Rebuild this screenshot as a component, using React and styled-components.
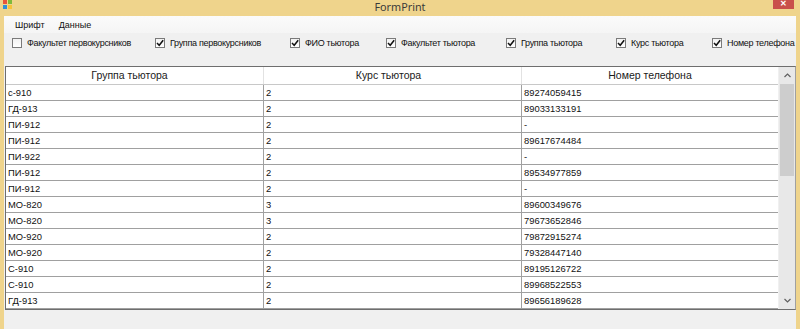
import styled, { createGlobalStyle } from "styled-components";

const GlobalStyle = createGlobalStyle`
  html, body {
    margin: 0;
    padding: 0;
    background: #f0f0f0;
  }
  body {
    font-family: "Liberation Sans", Arial, sans-serif;
    font-size: 9px;
    color: #000;
  }
`;

const Window = styled.div`
  width: 800px;
  height: 329px;
  display: flex;
  flex-direction: column;
  background: #efd48c;
  overflow: hidden;
`;

const TitleBar = styled.div`
  height: 16px;
  flex: none;
  position: relative;
  display: flex;
  align-items: flex-start;
  justify-content: center;
`;

const Title = styled.span`
  font-family: "Noto Sans", "Open Sans", sans-serif;
  font-size: 10.8px;
  color: #3a3a3a;
  line-height: 14px;
`;

const AppIcon = styled.svg`
  position: absolute;
  left: 3px;
  top: 0;
`;

const CloseButton = styled.div`
  position: absolute;
  right: 6px;
  top: 0;
  width: 21px;
  height: 9px;
  background: #c9504b;
  color: #fff;
  font-size: 8px;
  line-height: 8px;
  text-align: center;
  font-weight: bold;
`;

const Frame = styled.div`
  flex: 1;
  display: flex;
  padding: 0 4px 0 4px;
  min-height: 0;
`;

const Client = styled.div`
  flex: 1;
  background: #f0f0f0;
  display: flex;
  flex-direction: column;
  min-width: 0;
`;

const MenuBar = styled.div`
  height: 17px;
  flex: none;
  display: flex;
  align-items: flex-end;
  padding-left: 4px;
  background: linear-gradient(#fbfbfb, #f5f5f5);
`;

const MenuItem = styled.span`
  padding: 0 7px 1px;
  line-height: 13px;
  color: #111;
`;

const CheckRow = styled.div`
  height: 20px;
  flex: none;
  display: flex;
  align-items: center;
  padding-left: 8px;
`;

const CheckItem = styled.label`
  width: ${(p) => p.$w}px;
  flex: none;
  display: flex;
  align-items: center;
  gap: 5px;
  white-space: nowrap;
  letter-spacing: -0.3px;
  color: #111;
`;

const Box = styled.span`
  width: 8px;
  height: 8px;
  border: 1px solid #7a7a7a;
  background: linear-gradient(#f2f2f2, #ffffff);
  display: flex;
  align-items: center;
  justify-content: center;
  flex: none;
`;

const Grid = styled.div`
  margin: 13px 0 0 1px;
  height: 242px;
  flex: none;
  display: flex;
  border: 1px solid #6e6e6e;
  border-right-color: #a0a0a0;
  background: #fff;
`;

const TableArea = styled.div`
  flex: 1;
  overflow: hidden;
`;

const Row = styled.div`
  display: grid;
  grid-template-columns: 258px 258px 1fr;
  height: ${(p) => (p.$head ? 18 : 16)}px;
  box-sizing: border-box;
  border-bottom: 1px solid ${(p) => (p.$head ? "#c8c8c8" : "#a0a0a0")};
`;

const Cell = styled.div`
  padding: 0 2px;
  font-size: 9.4px;
  line-height: 15px;
  color: #111;
  border-right: 1px solid #a0a0a0;
  white-space: nowrap;
  overflow: hidden;
  &:last-child {
    border-right: none;
  }
`;

const HeadCell = styled.div`
  padding: 0 ${(p) => p.$pr}px 0 2px;
  font-size: 10.5px;
  line-height: 17px;
  text-align: center;
  color: #1a1a1a;
  border-right: 1px solid #e2e2e2;
  white-space: nowrap;
  overflow: hidden;
  &:last-child {
    border-right: none;
  }
`;

const ScrollBar = styled.div`
  width: 16px;
  flex: none;
  display: flex;
  flex-direction: column;
  background: #e8e8e8;
  border-left: 1px solid #f0f0f0;
`;

const Arrow = styled.div`
  height: 17px;
  display: flex;
  align-items: center;
  justify-content: center;
  flex: none;
`;

const Thumb = styled.div`
  height: 92px;
  margin: 0 1px;
  background: #cdcdcd;
  flex: none;
`;

const Track = styled.div`
  flex: 1;
`;

const checks = [
  { label: "Факультет первокурсников", w: 143, on: false },
  { label: "Группа первокурсников", w: 135, on: true },
  { label: "ФИО тьютора", w: 96, on: true },
  { label: "Факультет тьютора", w: 120, on: true },
  { label: "Группа тьютора", w: 110, on: true },
  { label: "Курс тьютора", w: 96, on: true },
  { label: "Номер телефона", w: 80, on: true },
];

const heads = [
  { label: "Группа тьютора", pr: 12 },
  { label: "Курс тьютора", pr: 10 },
  { label: "Номер телефона", pr: 2 },
];

const rows = [
  ["с-910", "2", "89274059415"],
  ["ГД-913", "2", "89033133191"],
  ["ПИ-912", "2", "-"],
  ["ПИ-912", "2", "89617674484"],
  ["ПИ-922", "2", "-"],
  ["ПИ-912", "2", "89534977859"],
  ["ПИ-912", "2", "-"],
  ["МО-820", "3", "89600349676"],
  ["МО-820", "3", "79673652846"],
  ["МО-920", "2", "79872915274"],
  ["МО-920", "2", "79328447140"],
  ["С-910", "2", "89195126722"],
  ["С-910", "2", "89968522553"],
  ["ГД-913", "2", "89656189628"],
];

const Check = () => (
  <svg width="8" height="8" viewBox="0 0 8 8">
    <path d="M1 4 L3.2 6.3 L7.2 1.2" fill="none" stroke="#111" strokeWidth="1.5" />
  </svg>
);

const Chevron = ({ up }) => (
  <svg width="7" height="5" viewBox="0 0 7 5">
    <path
      d={up ? "M0.5 4 L3.5 1 L6.5 4" : "M0.5 1 L3.5 4 L6.5 1"}
      fill="none"
      stroke="#606060"
      strokeWidth="1.2"
    />
  </svg>
);

const App = () => {
  return (
    <Window>
      <GlobalStyle />
      <TitleBar>
        <AppIcon width="10" height="9" viewBox="0 0 10 9">
          <rect x="0" y="0" width="4" height="4" fill="#e8553b" />
          <rect x="5" y="0" width="4" height="4" fill="#7fba3a" />
          <rect x="0" y="5" width="4" height="4" fill="#2f8fd8" />
          <rect x="5" y="5" width="4" height="4" fill="#f6c33a" />
        </AppIcon>
        <Title>FormPrint</Title>
        <CloseButton>✕</CloseButton>
      </TitleBar>
      <Frame>
        <Client>
          <MenuBar>
            <MenuItem>Шрифт</MenuItem>
            <MenuItem>Данные</MenuItem>
          </MenuBar>
          <CheckRow>
            {checks.map((c) => (
              <CheckItem key={c.label} $w={c.w}>
                <Box>{c.on && <Check />}</Box>
                {c.label}
              </CheckItem>
            ))}
          </CheckRow>
          <Grid>
            <TableArea>
              <Row $head>
                {heads.map((h) => (
                  <HeadCell key={h.label} $pr={h.pr}>
                    {h.label}
                  </HeadCell>
                ))}
              </Row>
              {rows.map((r, i) => (
                <Row key={i}>
                  {r.map((v, j) => (
                    <Cell key={j}>{v}</Cell>
                  ))}
                </Row>
              ))}
            </TableArea>
            <ScrollBar>
              <Arrow>
                <Chevron up />
              </Arrow>
              <Thumb />
              <Track />
              <Arrow>
                <Chevron />
              </Arrow>
            </ScrollBar>
          </Grid>
        </Client>
      </Frame>
    </Window>
  );
};

export default App;
